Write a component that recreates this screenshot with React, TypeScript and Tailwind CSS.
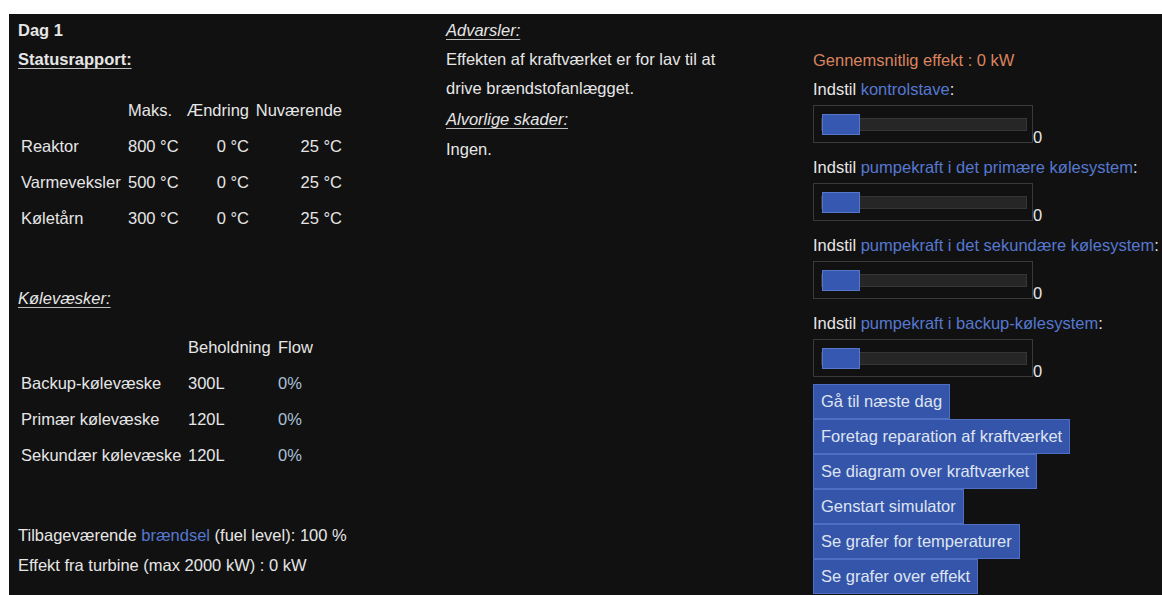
import React from "react";

const FONT = { fontFamily: '"Liberation Sans", Arial, sans-serif' };

const tempRows = [
  { name: "Reaktor", max: "800 °C", delta: "0 °C", now: "25 °C" },
  { name: "Varmeveksler", max: "500 °C", delta: "0 °C", now: "25 °C" },
  { name: "Køletårn", max: "300 °C", delta: "0 °C", now: "25 °C" },
];

const coolantRows = [
  { name: "Backup-kølevæske", amount: "300L", flow: "0%" },
  { name: "Primær kølevæske", amount: "120L", flow: "0%" },
  { name: "Sekundær kølevæske", amount: "120L", flow: "0%" },
];

const sliders = [
  "kontrolstave",
  "pumpekraft i det primære kølesystem",
  "pumpekraft i det sekundære kølesystem",
  "pumpekraft i backup-kølesystem",
];

const actions = [
  "Gå til næste dag",
  "Foretag reparation af kraftværket",
  "Se diagram over kraftværket",
  "Genstart simulator",
  "Se grafer for temperaturer",
  "Se grafer over effekt",
];

function Slider() {
  return (
    <div className="flex h-[38px] items-baseline">
      <div className="relative h-[38px] w-[220px] border border-[#3a3a3a]">
        <div className="absolute left-[7px] right-[5px] top-[12px] h-[13px] border border-[#363636] bg-[#262626]" />
        <div className="absolute left-[8px] top-[8px] h-[21px] w-[38px] border border-[#5676c8] bg-[#3658b0]" />
      </div>
      <span className="leading-none">0</span>
    </div>
  );
}

export default function App() {
  return (
    <div
      className="h-[595px] w-full overflow-hidden bg-white pl-[9px] pt-[14px] text-[16.5px] text-[#e6e6e6]"
      style={FONT}
    >
      <div className="flex h-full bg-[#111111] pl-[9px] pt-[2px]">
        {/* status column */}
        <div className="w-[428px] shrink-0">
          <div className="font-bold leading-[29px]">Dag 1</div>
          <div className="font-bold leading-[29px] underline decoration-[#bdbdbd] underline-offset-[3px]">
            Statusrapport:
          </div>

          <div className="mt-[18px] grid grid-cols-[107px_58px_63px_6px_87px] pl-[3px]">
            <div className="h-[36px]" />
            <div className="flex h-[36px] items-center">Maks.</div>
            <div className="flex h-[36px] items-center justify-end">Ændring</div>
            <div />
            <div className="flex h-[36px] items-center justify-end">Nuværende</div>
            {tempRows.map((r) => (
              <React.Fragment key={r.name}>
                <div className="flex h-[36px] items-center">{r.name}</div>
                <div className="flex h-[36px] items-center">{r.max}</div>
                <div className="flex h-[36px] items-center justify-end">{r.delta}</div>
                <div />
                <div className="flex h-[36px] items-center justify-end">{r.now}</div>
              </React.Fragment>
            ))}
          </div>

          <div className="mt-[48px] italic leading-[29px] underline decoration-[#bdbdbd] underline-offset-[3px]">
            Kølevæsker:
          </div>

          <div className="mt-[16px] grid grid-cols-[167px_90px_60px] pl-[3px]">
            <div className="h-[36px]" />
            <div className="flex h-[36px] items-center">Beholdning</div>
            <div className="flex h-[36px] items-center">Flow</div>
            {coolantRows.map((r) => (
              <React.Fragment key={r.name}>
                <div className="flex h-[36px] items-center">{r.name}</div>
                <div className="flex h-[36px] items-center">{r.amount}</div>
                <div className="flex h-[36px] items-center text-[#a9c0da]">{r.flow}</div>
              </React.Fragment>
            ))}
          </div>

          <div className="mt-[47px] leading-[30px]">
            Tilbageværende <span className="text-[#5678d0]">brændsel</span> (fuel level): 100 %
          </div>
          <div className="leading-[30px]">Effekt fra turbine (max 2000 kW) : 0 kW</div>
        </div>

        {/* warnings column */}
        <div className="w-[367px] shrink-0">
          <div className="italic leading-[29px] underline decoration-[#bdbdbd] underline-offset-[3px]">
            Advarsler:
          </div>
          <div className="w-[290px] leading-[29px]">
            Effekten af kraftværket er for lav til at drive brændstofanlægget.
          </div>
          <div className="italic leading-[33px] underline decoration-[#bdbdbd] underline-offset-[3px]">
            Alvorlige skader:
          </div>
          <div className="leading-[27px]">Ingen.</div>
        </div>

        {/* controls column */}
        <div className="min-w-0 flex-1 pt-[32px]">
          <div className="leading-[24px] text-[#d9845f]">Gennemsnitlig effekt : 0 kW</div>
          <div className="mt-[5px]">
            {sliders.map((s, i) => (
              <div key={s} className={i < sliders.length - 1 ? "mb-[12px]" : ""}>
                <div className="whitespace-nowrap leading-[24px]">
                  Indstil <span className="text-[#5678d0]">{s}</span>:
                </div>
                <div className="mt-[4px]">
                  <Slider />
                </div>
              </div>
            ))}
          </div>
          <div className="mt-[7px] flex flex-col items-start">
            {actions.map((a) => (
              <button
                key={a}
                className="h-[35px] border border-[#4e6fc4] bg-[#3455aa] px-[7px] text-left text-[#dfe4f1]"
              >
                {a}
              </button>
            ))}
          </div>
        </div>
      </div>
    </div>
  );
}
